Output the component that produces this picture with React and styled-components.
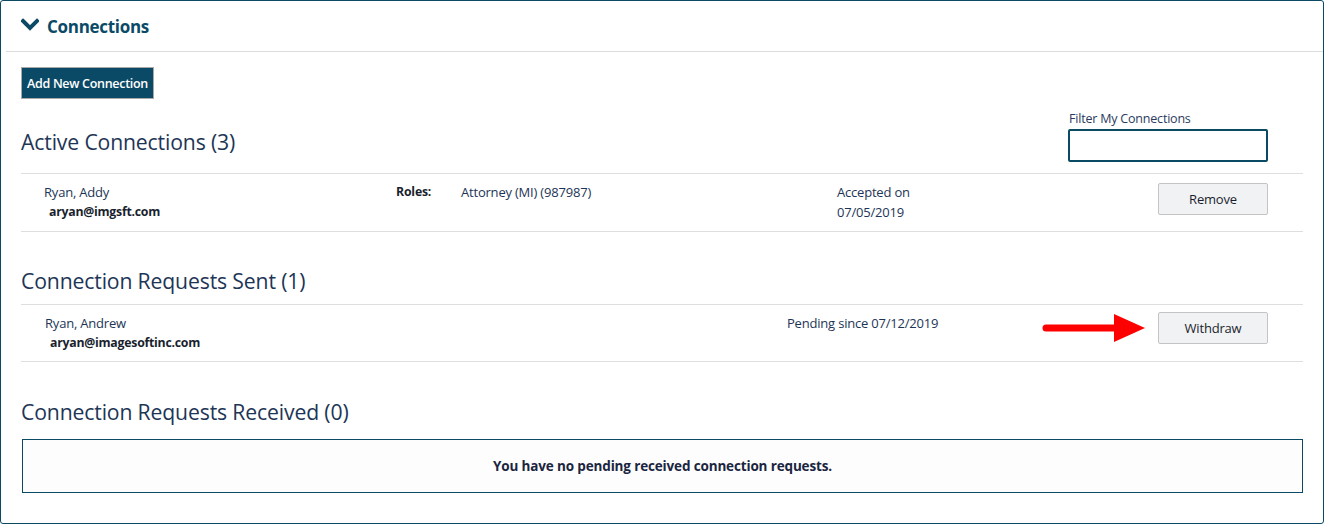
import React from 'react'
import styled, { createGlobalStyle } from 'styled-components'

const GlobalStyle = createGlobalStyle`
    html, body {
        margin: 0;
        padding: 0;
        background: #ffffff;
    }
    body {
        font-family: "Open Sans", "Noto Sans", sans-serif;
        color: #1d2f4c;
    }
`;

const Panel = styled.div`
    box-sizing: border-box;
    width: 1324px;
    height: 524px;
    border: 1px solid #0b4a63;
    border-radius: 3px;
    background: #fff;
`;

const PanelHeader = styled.div`
    display: flex;
    align-items: center;
    gap: 8px;
    height: 50px;
    margin-left: 5px;
    padding-left: 15px;
    border-bottom: 1px solid #dcdcdc;
    color: #0b4a66;
    font-size: 17px;
    font-weight: 700;
    letter-spacing: -0.3px;
    svg {
        margin-top: -3px;
    }
`;

const PanelBody = styled.div`
    padding: 15px 20px 0 20px;
`;

const PrimaryButton = styled.button`
    box-sizing: border-box;
    height: 32px;
    padding: 0 5px;
    background: #0b4a66;
    border: 1px solid #a9a9a9;
    color: #fff;
    font-family: inherit;
    font-size: 12.5px;
    font-weight: 600;
    letter-spacing: -0.3px;
`;

const SectionHead = styled.div`
    display: flex;
    align-items: flex-end;
    justify-content: space-between;
    height: ${p => p.$height}px;
    padding-right: 35px;
    border-bottom: 1px solid ${p => (p.$noLine ? 'transparent' : '#dedede')};
    padding-bottom: ${p => p.$bottom}px;
    box-sizing: border-box;
`;

const SectionTitle = styled.h2`
    margin: 0;
    font-size: 21.2px;
    font-weight: 400;
    letter-spacing: -0.15px;
    color: #1d3556;
`;

const Filter = styled.div`
    display: flex;
    flex-direction: column;
    gap: 2px;
    margin-bottom: -6px;
    label {
        font-size: 12.5px;
        color: #2b3a5e;
        letter-spacing: -0.2px;
        padding-left: 1px;
    }
    input {
        box-sizing: border-box;
        width: 200px;
        height: 33px;
        border: 2px solid #0b4a63;
        border-radius: 2px;
        outline: none;
    }
`;

const Row = styled.div`
    display: grid;
    grid-template-columns: ${p => p.$cols};
    align-items: start;
    height: ${p => p.$h}px;
    box-sizing: border-box;
    padding: 8px 35px 0 0;
    border-bottom: 1px solid #dedede;
    font-size: 13px;
    letter-spacing: -0.2px;
    line-height: 20px;
`;

const Name = styled.div`
    padding-left: ${p => p.$indent}px;
    color: #1d3556;
    strong {
        display: block;
        padding-left: 5px;
        font-size: 12.3px;
        font-weight: 700;
        letter-spacing: -0.25px;
        color: #1a1f2e;
    }
`;

const Label = styled.div`
    font-weight: 700;
    font-size: 12.3px;
    color: #1a1f2e;
`;

const Cell = styled.div`
    color: #1d3556;
`;

const ActionCell = styled.div`
    display: flex;
    align-items: center;
    justify-content: flex-end;
    gap: 12px;
    margin-top: ${p => p.$offset}px;
`;

const GreyButton = styled.button`
    box-sizing: border-box;
    width: 110px;
    height: 32px;
    background: #f1f2f4;
    border: 1px solid #c4c4c4;
    border-radius: 2px;
    color: #1a1f2e;
    font-family: inherit;
    font-size: 13px;
    letter-spacing: -0.2px;
`;

const EmptyBox = styled.div`
    display: flex;
    align-items: center;
    justify-content: center;
    box-sizing: border-box;
    height: 54px;
    margin: 12px 0 0 1px;
    border: 1px solid #0b4a63;
    background: #fdfdfd;
    font-size: 13.5px;
    font-weight: 700;
    letter-spacing: -0.15px;
    color: #1a2540;
`;

const Chevron = () => (
    <svg width="18" height="14" viewBox="0 0 18 14">
        <path d="M2 3 L9 10 L16 3" fill="none" stroke="#0b4a66" strokeWidth="4" strokeLinecap="square" />
    </svg>
);

const Arrow = () => (
    <svg width="104" height="30" viewBox="0 0 104 30">
        <path d="M4 15 L74 15" stroke="#ff0000" strokeWidth="7" strokeLinecap="round" />
        <path d="M72 1 L103 15 L72 29 Z" fill="#ff0000" />
    </svg>
);

export default function App() {
    return (
        <>
            <GlobalStyle />
            <Panel>
                <PanelHeader>
                    <Chevron />
                    Connections
                </PanelHeader>
                <PanelBody>
                    <PrimaryButton>Add New Connection</PrimaryButton>

                    <SectionHead $height={75} $bottom={17}>
                        <SectionTitle>Active Connections (3)</SectionTitle>
                        <Filter>
                            <label>Filter My Connections</label>
                            <input type="text" />
                        </Filter>
                    </SectionHead>
                    <Row $cols="375px 65px 376px 1fr auto" $h={58}>
                        <Name $indent={23}>
                            Ryan, Addy
                            <strong>aryan@imgsft.com</strong>
                        </Name>
                        <Label>Roles:</Label>
                        <Cell>Attorney (MI) (987987)</Cell>
                        <Cell>Accepted on<br />07/05/2019</Cell>
                        <ActionCell $offset={1}><GreyButton>Remove</GreyButton></ActionCell>
                    </Row>

                    <SectionHead $height={73} $bottom={9}>
                        <SectionTitle>Connection Requests Sent (1)</SectionTitle>
                    </SectionHead>
                    <Row $cols="766px 1fr auto" $h={57}>
                        <Name $indent={24}>
                            Ryan, Andrew
                            <strong>aryan@imagesoftinc.com</strong>
                        </Name>
                        <Cell>Pending since 07/12/2019</Cell>
                        <ActionCell $offset={-1}><Arrow /><GreyButton>Withdraw</GreyButton></ActionCell>
                    </Row>

                    <SectionHead $height={65} $bottom={0} $noLine>
                        <SectionTitle>Connection Requests Received (0)</SectionTitle>
                    </SectionHead>
                    <EmptyBox>You have no pending received connection requests.</EmptyBox>
                </PanelBody>
            </Panel>
        </>
    );
}
